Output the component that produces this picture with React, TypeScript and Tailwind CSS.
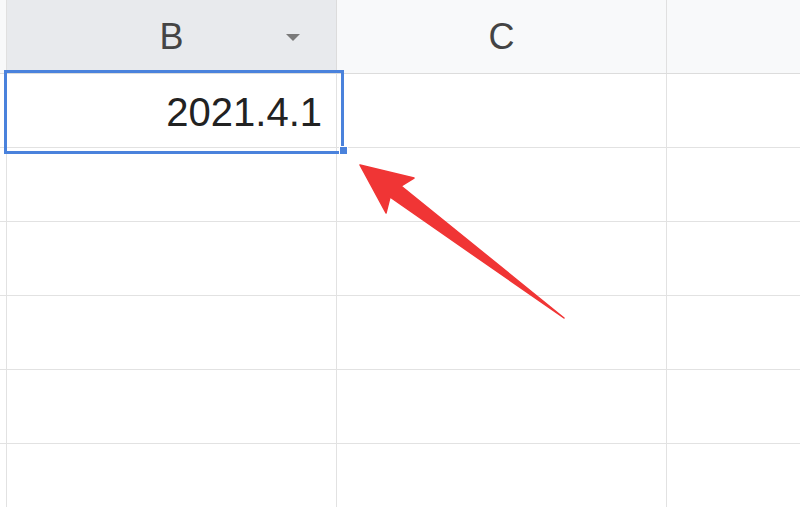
const font = { fontFamily: '"Liberation Sans", Arial, sans-serif' };

const rows = [0, 1, 2, 3, 4, 5];

export default function App() {
  return (
    <div className="relative w-[800px] h-[507px] overflow-hidden bg-white" style={font}>
      {/* column header */}
      <div className="flex h-[74px] border-b border-[#dcdcdc]">
        <div className="w-[7px] shrink-0 bg-[#f8f9fa] border-r border-[#e0e0e0]" />
        <div className="relative w-[330px] shrink-0 bg-[#e8eaed] border-r border-[#dcdcdc] flex items-center justify-center">
          <span className="text-[36px] text-[#444] leading-none">B</span>
          <span className="absolute left-[279px] top-[34px] w-0 h-0 border-l-[7px] border-r-[7px] border-t-[7px] border-l-transparent border-r-transparent border-t-[#7a7a7a]" />
        </div>
        <div className="w-[330px] shrink-0 bg-[#f8f9fa] border-r border-[#e0e0e0] flex items-center justify-center">
          <span className="text-[36px] text-[#444] leading-none">C</span>
        </div>
        <div className="flex-1 bg-[#f8f9fa]" />
      </div>

      {/* grid rows */}
      {rows.map((r) => (
        <div key={r} className="flex h-[74px] border-b border-[#e2e2e2]">
          <div className="w-[7px] shrink-0 border-r border-[#e2e2e2]" />
          <div className="w-[330px] shrink-0 border-r border-[#e2e2e2] flex items-center justify-end pr-[14px]">
            {r === 0 && <span className="text-[40px] text-[#222] leading-none pt-[2px]">2021.4.1</span>}
          </div>
          <div className="w-[330px] shrink-0 border-r border-[#e2e2e2]" />
          <div className="flex-1" />
        </div>
      ))}

      {/* selection */}
      <div className="absolute left-[4px] top-[70px] w-[340px] h-[84px] border-[3px] border-[#4a82dc]" />
      <div className="absolute left-[339px] top-[146px] w-[9px] h-[9px] bg-[#4a82dc] border border-white" />

      {/* annotation arrow */}
      <svg className="absolute left-0 top-0" width="800" height="507" viewBox="0 0 800 507">
        <path
          d="M360 165 L414 178 L401 186 L564 318 L390 197 L386 213 Z"
          fill="#f03535"
          stroke="#f03535"
          strokeWidth="1.5"
          strokeLinejoin="round"
        />
      </svg>
    </div>
  );
}
